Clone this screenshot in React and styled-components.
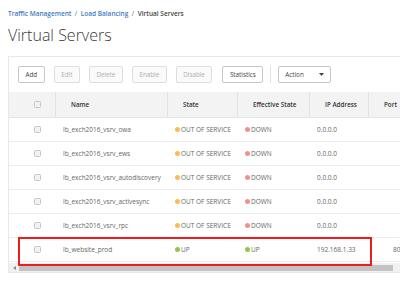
import styled, { createGlobalStyle } from "styled-components";

const GlobalStyle = createGlobalStyle`
  html, body {
    margin: 0;
    padding: 0;
    background: #ffffff;
  }
  body {
    font-family: "Open Sans", "Noto Sans", sans-serif;
    color: #333;
    overflow: hidden;
  }
`;

const Page = styled.div`
  position: relative;
  width: 400px;
  height: 291px;
  padding-left: 8px;
  box-sizing: border-box;
  overflow: hidden;
`;

const Breadcrumb = styled.div`
  padding-top: 9px;
  height: 9px;
  line-height: 9px;
  font-size: 6.5px;
  font-weight: 600;
  white-space: nowrap;
  color: #444;

  a {
    color: #3d7cc0;
    text-decoration: none;
  }

  span.sep {
    color: #666;
    margin: 0 3.5px;
    font-weight: 400;
  }
`;

const Title = styled.h1`
  margin: 7px 0 0;
  height: 20px;
  line-height: 20px;
  font-size: 16px;
  font-weight: 300;
  color: #3a3a3a;
  white-space: nowrap;
`;

const Panel = styled.div`
  margin-top: 11px;
  width: 420px;
  border: 1px solid #e8e8e8;
  border-right: none;
  background: #fff;
  overflow: hidden;
`;

const Toolbar = styled.div`
  display: flex;
  align-items: center;
  gap: 9px;
  padding: 9px 0 9px 9px;
`;

const Button = styled.button`
  height: 17px;
  padding: 0 6.5px;
  box-sizing: border-box;
  font-family: inherit;
  font-size: 6.3px;
  border-radius: 2px;
  border: 1px solid ${(p) => (p.$disabled ? "#dedede" : "#c8c8c8")};
  background: ${(p) => (p.$disabled ? "#fafafa" : "#fff")};
  color: ${(p) => (p.$disabled ? "#b0b0b0" : "#444")};
  margin-left: ${(p) => (p.$gapBefore ? "1px" : "0")};
`;

const Separator = styled.div`
  width: 1px;
  height: 17px;
  background: #e2e2e2;
  margin: 0 -2px;
`;

const Select = styled.div`
  display: flex;
  align-items: center;
  justify-content: space-between;
  width: 53px;
  height: 17px;
  box-sizing: border-box;
  padding: 0 6px;
  border: 1px solid #c8c8c8;
  border-radius: 2px;
  font-size: 6.3px;
  color: #444;

  svg {
    width: 5px;
    height: 3px;
  }
`;

const COLS = "46px 112px 70px 72px 59px 70px";

const HeadRow = styled.div`
  display: grid;
  grid-template-columns: ${COLS};
  height: 26px;
  background: #f3f3f3;
  border-bottom: 1px solid #e6e6e6;
  box-sizing: border-box;
`;

const HeadCell = styled.div`
  display: flex;
  align-items: center;
  padding-left: ${(p) => p.$pad || "15px"};
  border-left: ${(p) => (p.$first ? "none" : "1px solid #e2e2e2")};
  font-size: 6.3px;
  font-weight: 600;
  color: #333;
  white-space: nowrap;
`;

const Row = styled.div`
  display: grid;
  grid-template-columns: ${COLS};
  height: 24px;
  border-bottom: 1px solid #ececec;
  box-sizing: border-box;
`;

const Cell = styled.div`
  display: flex;
  align-items: center;
  padding-left: ${(p) => p.$pad || "8px"};
  font-size: 6.5px;
  color: #666;
  white-space: nowrap;
`;

const Checkbox = styled.span`
  display: inline-block;
  width: 7px;
  height: 7px;
  box-sizing: border-box;
  border: 1px solid #c6c6c6;
  border-radius: 1.5px;
  background: #f2f2f2;
`;

const Dot = styled.span`
  display: inline-block;
  width: 5px;
  height: 5px;
  border-radius: 50%;
  margin-right: 1px;
  background: ${(p) => p.$color};
`;

const Scrollbar = styled.div`
  display: flex;
  align-items: center;
  height: 9px;
  background: #f1f1f1;
  margin-top: 1px;
`;

const ScrollArrow = styled.div`
  width: 10px;
  display: flex;
  justify-content: center;
  align-items: center;

  svg {
    width: 3px;
    height: 4px;
  }
`;

const ScrollThumb = styled.div`
  width: 374px;
  height: 6px;
  background: #c3c3c3;
`;

const Highlight = styled.div`
  position: absolute;
  left: 18px;
  top: 237px;
  width: 354px;
  height: 29px;
  box-sizing: border-box;
  border: 2px solid #ee1c1c;
  pointer-events: none;
`;

const STATUS = {
  oos: { color: "#f7bd5f", label: "OUT OF SERVICE" },
  down: { color: "#f29090", label: "DOWN" },
  up: { color: "#8fc84a", label: "UP" },
};

const servers = [
  { name: "lb_exch2016_vsrv_owa", state: "oos", eff: "down", ip: "0.0.0.0", port: "" },
  { name: "lb_exch2016_vsrv_ews", state: "oos", eff: "down", ip: "0.0.0.0", port: "" },
  { name: "lb_exch2016_vsrv_autodiscovery", state: "oos", eff: "down", ip: "0.0.0.0", port: "" },
  { name: "lb_exch2016_vsrv_activesync", state: "oos", eff: "down", ip: "0.0.0.0", port: "" },
  { name: "lb_exch2016_vsrv_rpc", state: "oos", eff: "down", ip: "0.0.0.0", port: "" },
  { name: "lb_website_prod", state: "up", eff: "up", ip: "192.168.1.33", port: "80" },
];

function Status({ kind }) {
  const s = STATUS[kind];
  return (
    <>
      <Dot $color={s.color} />
      {s.label}
    </>
  );
}

export default function App() {
  return (
    <Page>
      <GlobalStyle />
      <Breadcrumb>
        <a href="#">Traffic Management</a>
        <span className="sep">/</span>
        <a href="#">Load Balancing</a>
        <span className="sep">/</span>
        Virtual Servers
      </Breadcrumb>
      <Title>Virtual Servers</Title>

      <Panel>
        <Toolbar>
          <Button>Add</Button>
          <Button $disabled>Edit</Button>
          <Button $disabled>Delete</Button>
          <Button $disabled>Enable</Button>
          <Button $disabled>Disable</Button>
          <Button $gapBefore>Statistics</Button>
          <Separator />
          <Select>
            Action
            <svg viewBox="0 0 5 3">
              <path d="M0 0h5L2.5 3z" fill="#444" />
            </svg>
          </Select>
        </Toolbar>

        <HeadRow>
          <HeadCell $first $pad="25px">
            <Checkbox />
          </HeadCell>
          <HeadCell>Name</HeadCell>
          <HeadCell>State</HeadCell>
          <HeadCell>Effective State</HeadCell>
          <HeadCell>IP Address</HeadCell>
          <HeadCell>Port</HeadCell>
        </HeadRow>

        {servers.map((s) => (
          <Row key={s.name}>
            <Cell $pad="25px">
              <Checkbox />
            </Cell>
            <Cell>{s.name}</Cell>
            <Cell>
              <Status kind={s.state} />
            </Cell>
            <Cell>
              <Status kind={s.eff} />
            </Cell>
            <Cell>{s.ip}</Cell>
            <Cell $pad="25px">{s.port}</Cell>
          </Row>
        ))}

        <Scrollbar>
          <ScrollArrow>
            <svg viewBox="0 0 3 4">
              <path d="M3 0v4L0 2z" fill="#8a8a8a" />
            </svg>
          </ScrollArrow>
          <ScrollThumb />
        </Scrollbar>
      </Panel>

      <Highlight />
    </Page>
  );
}
